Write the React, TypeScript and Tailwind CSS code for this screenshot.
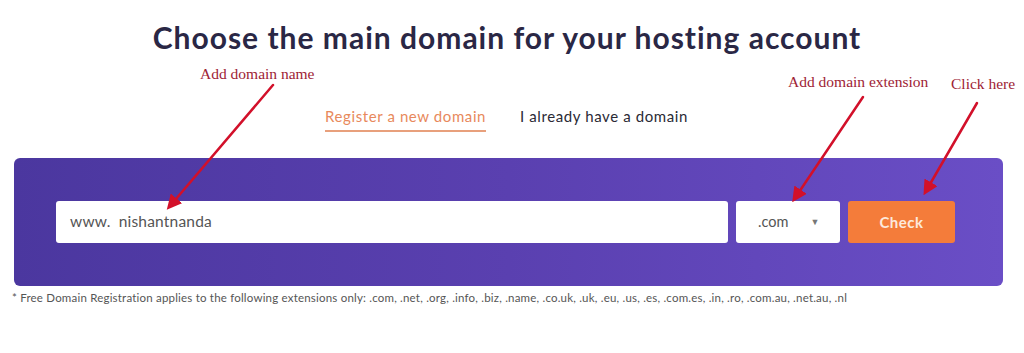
import React from "react";

export default function App() {
  const font = { fontFamily: "Lato, 'Open Sans', sans-serif" } as React.CSSProperties;
  const serif = { fontFamily: "'Liberation Serif', serif" } as React.CSSProperties;
  return (
    <div className="relative w-[1024px] h-[353px] bg-white overflow-hidden" style={font}>
      <h1 className="pt-[19px] text-center text-[30px] leading-[36px] font-bold text-[#2a2745] tracking-[1px] mr-[10px]">
        Choose the main domain for your hosting account
      </h1>
      <div className="mt-[51px] flex justify-center gap-[34px] text-[15px] leading-[20px] tracking-[0.6px] mr-[11px]">
        <div className="pb-[4px] border-b-2 border-[#e8a07c] text-[#e8895c]">Register a new domain</div>
        <div className="pb-[4px] border-b-2 border-transparent text-[#2a2a35]">I already have a domain</div>
      </div>
      <div className="mt-[26px] ml-[14px] w-[989px] h-[128px] rounded-[6px] bg-gradient-to-r from-[#4b379f] via-[#5a40b0] to-[#6a4ec6] pl-[42px] pt-[43px] flex gap-[8px]">
        <div className="w-[672px] h-[42px] bg-white rounded-[3px] flex items-center pl-[14px] text-[15.5px] tracking-[0.2px] text-[#555]">
          <span>www.</span>
          <span className="ml-[8px]">nishantnanda</span>
        </div>
        <div className="w-[104px] h-[42px] bg-white rounded-[3px] flex items-center pl-[22px] text-[14.5px] text-[#555]">
          <span>.com</span>
          <span className="ml-[22px] text-[9px] text-[#777]">▼</span>
        </div>
        <div className="w-[107px] h-[42px] bg-[#f47c3a] rounded-[3px] flex items-center justify-center text-[15px] tracking-[0.5px] font-bold text-[#fde9dc]">
          Check
        </div>
      </div>
      <p className="mt-[5px] ml-[12px] text-[11.5px] leading-[14px] tracking-[0.2px] text-[#555]">
        * Free Domain Registration applies to the following extensions only: .com, .net, .org, .info, .biz, .name, .co.uk, .uk, .eu, .us, .es, .com.es, .in, .ro, .com.au, .net.au, .nl
      </p>

      <div className="absolute left-[200px] top-[62px] text-[15.5px] text-[#9e2335]" style={serif}>
        Add domain name
      </div>
      <div className="absolute left-[788px] top-[70px] text-[15.5px] text-[#9e2335]" style={serif}>
        Add domain extension
      </div>
      <div className="absolute left-[951px] top-[72px] text-[15.5px] text-[#9e2335]" style={serif}>
        Click here
      </div>

      <svg className="absolute left-0 top-0 pointer-events-none" width="1024" height="353" viewBox="0 0 1024 353">
        <defs>
          <marker id="ah" markerWidth="6" markerHeight="6" refX="4" refY="3" orient="auto" markerUnits="strokeWidth">
            <path d="M0,0 L6,3 L0,6 Z" fill="#d2102a" />
          </marker>
        </defs>
        <g stroke="#d2102a" strokeWidth="2.5" strokeLinecap="round" fill="none">
          <line x1="273" y1="85" x2="170" y2="206" markerEnd="url(#ah)" />
          <line x1="863" y1="97" x2="795" y2="198" markerEnd="url(#ah)" />
          <line x1="977" y1="103" x2="926" y2="191" markerEnd="url(#ah)" />
        </g>
      </svg>
    </div>
  );
}
